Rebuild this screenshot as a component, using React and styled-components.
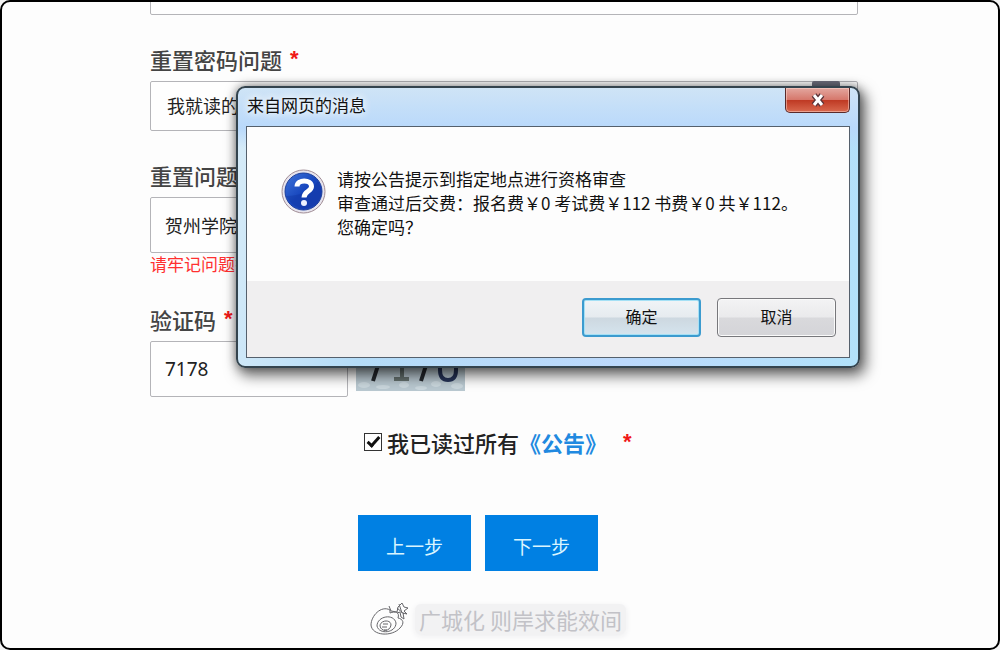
import React from "react";
import styled, { createGlobalStyle, css } from "styled-components";

const GlobalStyle = createGlobalStyle`
  *, *::before, *::after { box-sizing: border-box; }
  body {
    margin: 0;
    background: #f4f4f4;
    color: #222;
    font-family: "Noto Sans CJK SC", "Noto Sans", sans-serif;
  }
  button, input, select { font-family: inherit; margin: 0; }
`;

const Frame = styled.main`
  position: relative;
  min-height: 100vh;
  overflow: hidden;
  border: 2px solid #000;
  border-radius: 10px;
  background: #fdfdfd;
`;

const Form = styled.form`
  margin-top: -43px;
  padding: 0 140px 0 148px;
`;

const Label = styled.label`
  display: flex;
  align-items: center;
  width: fit-content;
  height: 32px;
  margin: 28px 0 6px;
  font-size: 22px;
  font-weight: 500;
  line-height: 32px;
  color: #444;
`;

const Star = styled.span`
  margin-left: ${(p) => (p.$wide ? "16px" : "8px")};
  font-family: "Liberation Sans", sans-serif;
  font-weight: bold;
  font-size: 22px;
  line-height: 32px;
  color: #f01818;
`;

const boxed = css`
  display: block;
  width: 100%;
  height: 56px;
  padding: 0 14px;
  border: 1px solid #b4b4b8;
  border-radius: 2px;
  background: #fefefe;
  color: #222;
  font-family: "Noto Sans", "Noto Sans CJK SC", sans-serif;
  font-size: 18px;
`;

const TextBox = styled.input`
  ${boxed}
  ${(p) => p.$short && "width: 198px; font-size: 19px;"}
`;

const SelectWrap = styled.div`
  position: relative;
`;

const Select = styled.select`
  ${boxed}
  height: 50px;
  padding: 0 16px;
  appearance: none;
`;

const SelectArrow = styled.span`
  position: absolute;
  top: 0;
  right: 18px;
  width: 28px;
  height: 24px;
  border-radius: 2px;
  background: #6d6e7c;
  pointer-events: none;
`;

const Hint = styled.p`
  margin: 0;
  font-size: 17px;
  line-height: 22px;
  color: #ff3030;
`;

const CaptchaRow = styled.div`
  display: flex;
  align-items: flex-start;
  gap: 8px;
`;

const Captcha = styled.svg`
  width: 109px;
  height: 50px;
`;

const Agreement = styled.div`
  display: flex;
  align-items: center;
  height: 32px;
  margin: 29px 0 0 214px;
  font-size: 22px;
  line-height: 32px;
  white-space: nowrap;

  label { color: #222; font-weight: 500; }
  a { color: #2189e0; font-weight: bold; text-decoration: none; }
`;

const Check = styled.input`
  appearance: none;
  display: grid;
  place-items: center;
  width: 18px;
  height: 18px;
  margin-right: 5px;
  border: 1px solid #333;
  background: #fff;

  &:checked::after {
    content: "";
    width: 7px;
    height: 13px;
    margin-bottom: 4px;
    border: solid #111;
    border-width: 0 3px 3px 0;
    transform: rotate(42deg);
  }
`;

const Steps = styled.div`
  display: flex;
  gap: 14px;
  margin: 57px 0 0 208px;
`;

const StepButton = styled.button`
  width: 113px;
  height: 56px;
  padding: 4px 0 0;
  border: 0;
  background: #0080e3;
  color: #d9f5ff;
  font-size: 19px;
`;

const Watermark = styled.footer`
  display: flex;
  align-items: center;
  gap: 6px;
  height: 36px;
  margin: 30px 0 0 367px;

  svg { width: 40px; height: 36px; flex: none; }
  span {
    padding: 0 4px;
    border-radius: 6px;
    background: #f2f2f3;
    box-shadow: 0 2px 6px #ececee;
    color: #c2c2c7;
    font-size: 22px;
    line-height: 30px;
    white-space: nowrap;
  }
`;

const Dialog = styled.section`
  position: absolute;
  top: 84px;
  left: 234px;
  right: 138px;
  padding: 0 8px 8px;
  border: 2px solid #34444e;
  border-radius: 9px;
  background:
    linear-gradient(#cfe4f6, #b9d9fb 40px, transparent 60px),
    linear-gradient(100deg, #d8ecf8 0%, #b4dcf8 25%, #bcd9fc 65%, #b2e2fa 100%);
  box-shadow: 4px 6px 14px 2px rgba(0, 0, 0, 0.55), 0 0 10px rgba(0, 0, 0, 0.35);
`;

const TitleBar = styled.header`
  display: flex;
  justify-content: space-between;
  align-items: flex-start;
  height: 38px;

  h1 {
    margin: 0;
    padding-left: 1px;
    font-size: 17px;
    font-weight: normal;
    line-height: 34px;
    color: #111;
    text-shadow: 0 0 8px #fff, 0 0 8px #fff;
  }
`;

const Close = styled.button`
  display: grid;
  place-items: center;
  width: 65px;
  height: 25px;
  padding: 0;
  border: 1px solid #5a2a2a;
  border-top: 0;
  border-radius: 0 0 5px 5px;
  background: linear-gradient(#e3a79f 0%, #d6786c 48%, #bf3a24 52%, #d9694f 100%);
  box-shadow: inset 0 0 0 1px rgba(255, 220, 210, 0.5);

  svg { width: 18px; height: 16px; }
`;

const Panel = styled.div`
  border: 1px solid #55606c;
  background: #fdfdfd;
`;

const Message = styled.div`
  display: flex;
  gap: 11px;
  height: 154px;
  padding: 40px 20px 0 34px;

  svg { width: 45px; height: 45px; flex: none; margin-top: 2px; }
  p {
    margin: 0;
    color: #111;
    font-size: 17px;
    line-height: 24px;
    white-space: nowrap;
  }
`;

const Actions = styled.div`
  display: flex;
  justify-content: flex-end;
  gap: 16px;
  height: 76px;
  padding: 17px 13px 0;
  background: #f0eff0;
`;

const DialogButton = styled.button`
  width: 119px;
  height: 39px;
  padding: 0 0 4px;
  border: ${(p) => (p.$primary ? "2px solid #3c9bcf" : "1px solid #77777b")};
  border-radius: 4px;
  background: ${(p) =>
    p.$primary
      ? "linear-gradient(#f0f4f7 0%, #e6ebef 48%, #cdd8e0 52%, #d5e4ee 100%)"
      : "linear-gradient(#f3f3f4 0%, #eaeaec 48%, #d9d9dc 52%, #d4d4d8 100%)"};
  box-shadow: inset 0 0 0 1px ${(p) => (p.$primary ? "#a4e0f5" : "#fafafa")};
  color: #111;
  font-size: 16px;
`;

function CaptchaImage() {
  return (
    <Captcha viewBox="0 0 109 50" role="img" aria-label="7178">
      <rect width="109" height="50" fill="#b9c8d0" />
      <g fill="#dce6ea" opacity=".5">
        <ellipse cx="8" cy="44" rx="6" ry="3" /><ellipse cx="27" cy="46" rx="7" ry="2" />
        <ellipse cx="48" cy="44" rx="5" ry="3" /><ellipse cx="65" cy="47" rx="6" ry="2" />
        <ellipse cx="80" cy="43" rx="5" ry="3" /><ellipse cx="101" cy="45" rx="6" ry="3" />
      </g>
      <g fill="none" strokeWidth="4">
        <path d="M10 15h15L17 40" stroke="#24282d" />
        <path d="M46 15v22M38 38h15" stroke="#65716f" />
        <path d="M58 15h15L65 40" stroke="#24282d" />
        <path d="M84 20v9q0 10 8 10t8-10v-9" stroke="#263458" />
      </g>
    </Captcha>
  );
}

function QuestionIcon() {
  return (
    <svg viewBox="0 0 45 45" aria-hidden="true">
      <defs>
        <linearGradient id="ball" x1="0" y1="0" x2="1" y2="1">
          <stop offset="0" stopColor="#3f74da" />
          <stop offset=".5" stopColor="#1746bd" />
          <stop offset="1" stopColor="#1c3fb4" />
        </linearGradient>
      </defs>
      <circle cx="22.500" cy="22.500" r="21.500" fill="#e6e4ee" stroke="#a08c94" />
      <circle cx="22.500" cy="22.500" r="18.500" fill="url(#ball)" stroke="#1c3f9c" />
      <path d="M5 27Q26 27 37 12Q45 27 34 36Q16 46 5 27Z" fill="#0e309c" opacity=".35" />
      <path d="M16 17.500C16 10 30.500 10 30.500 17.500C30.500 22.500 23 22 23 28.500" fill="none" stroke="#fff" strokeWidth="5" />
      <circle cx="23" cy="34" r="3" fill="#eef1ff" />
    </svg>
  );
}

function WeiboIcon() {
  return (
    <svg viewBox="0 0 40 36" fill="none" stroke="#66666a" strokeWidth="1" aria-hidden="true">
      <path d="M21 9C12 4 2 15 2 24C3 35 23 36 31 27C36 22 34 18 29 17C31 11 26 10 21 12Z" />
      <path d="M8 25C8 15 25 12 27 22C27 32 10 34 8 25Z" />
      <path d="M11 25C11 19 22 18 22 24C21 31 12 31 11 25ZM14 23h5M13 26h5M15 29h3" />
      <path d="M20 5l2 5 6 1 1-5 4-4 2 4 4 1-4 3 3 3-4-1 1 6-3-2-1-5-3 1M28 7l7 6M30 3l3 9" />
    </svg>
  );
}

export default function App() {
  return (
    <>
      <GlobalStyle />
      <Frame>
        <Form onSubmit={(e) => e.preventDefault()}>
          <TextBox aria-label="密码" type="text" />

          <Label htmlFor="question">重置密码问题<Star>*</Star></Label>
          <SelectWrap>
            <Select id="question"><option>我就读的学校名称？</option></Select>
            <SelectArrow />
          </SelectWrap>

          <Label htmlFor="answer">重置问题答案<Star>*</Star></Label>
          <TextBox id="answer" type="text" defaultValue="贺州学院" />
          <Hint>请牢记问题答案</Hint>

          <Label htmlFor="code">验证码<Star>*</Star></Label>
          <CaptchaRow>
            <TextBox id="code" type="text" defaultValue="7178" $short />
            <CaptchaImage />
          </CaptchaRow>

          <Agreement>
            <Check id="agree" type="checkbox" defaultChecked />
            <label htmlFor="agree">我已读过所有</label>
            <a href="#notice">《公告》</a>
            <Star $wide>*</Star>
          </Agreement>

          <Steps>
            <StepButton type="button">上一步</StepButton>
            <StepButton type="submit">下一步</StepButton>
          </Steps>
        </Form>

        <Watermark>
          <WeiboIcon />
          <span>广城化 则岸求能效间</span>
        </Watermark>

        <Dialog role="dialog" aria-labelledby="dialog-title">
          <TitleBar>
            <h1 id="dialog-title">来自网页的消息</h1>
            <Close type="button" aria-label="关闭">
              <svg viewBox="0 0 18 16" fill="none">
                <path d="M5 3l8 10M13 3L5 13" stroke="#5b3438" strokeWidth="6" />
                <path d="M5 3l8 10M13 3L5 13" stroke="#fff" strokeWidth="3" />
              </svg>
            </Close>
          </TitleBar>
          <Panel>
            <Message>
              <QuestionIcon />
              <p>
                请按公告提示到指定地点进行资格审查<br />
                审查通过后交费：报名费￥0 考试费￥112 书费￥0 共￥112。<br />
                您确定吗？
              </p>
            </Message>
            <Actions>
              <DialogButton type="button" $primary>确定</DialogButton>
              <DialogButton type="button">取消</DialogButton>
            </Actions>
          </Panel>
        </Dialog>
      </Frame>
    </>
  );
}
